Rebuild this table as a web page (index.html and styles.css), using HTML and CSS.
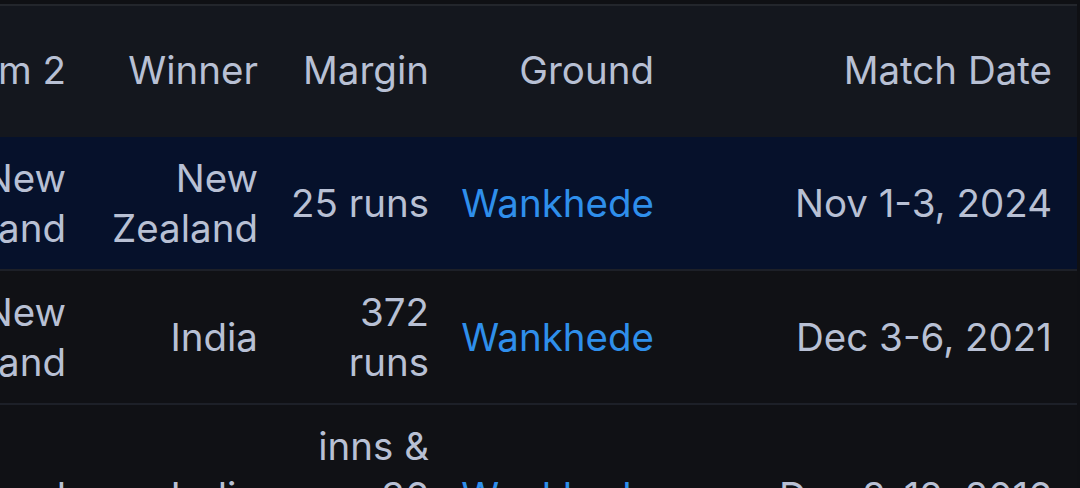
FILE: index.html
```html
<!DOCTYPE html>
<html lang="en">
<head>
<meta charset="utf-8">
<title>Matches</title>
<link rel="stylesheet" href="styles.css">
</head>
<body>
<div class="scroller">
  <table class="matches">
    <colgroup>
      <col class="c-team">
      <col class="c-winner">
      <col class="c-margin">
      <col class="c-ground">
      <col class="c-date">
    </colgroup>
    <thead>
      <tr>
        <th>Team 2</th>
        <th>Winner</th>
        <th>Margin</th>
        <th>Ground</th>
        <th class="last">Match Date</th>
      </tr>
    </thead>
    <tbody>
      <tr class="active">
        <td>New Zealand</td>
        <td>New Zealand</td>
        <td>25 runs</td>
        <td><a class="ground" href="#">Wankhede</a></td>
        <td class="last">Nov 1-3, 2024</td>
      </tr>
      <tr>
        <td>New Zealand</td>
        <td>India</td>
        <td>372 runs</td>
        <td><a class="ground" href="#">Wankhede</a></td>
        <td class="last">Dec 3-6, 2021</td>
      </tr>
      <tr>
        <td>England</td>
        <td>India</td>
        <td>inns &amp; 36<br>runs</td>
        <td><a class="ground" href="#">Wankhede</a></td>
        <td class="last">Dec 8-12, 2016</td>
      </tr>
    </tbody>
  </table>
</div>
</body>
</html>
```

FILE: styles.css
```css
html, body {
  margin: 0;
  padding: 0;
  background: #0f1014;
  height: 100%;
  overflow: hidden;
}

body {
  font-family: "Inter", "Noto Sans", sans-serif;
  color: #b8c0d4;
}

.scroller {
  margin-top: 4px;
  width: 1077px;
  overflow: hidden;
  border-top: 2px solid #23262c;
  background: #101115;
}

.matches {
  margin-left: -99px;
  border-collapse: collapse;
  table-layout: fixed;
  width: 1176px;
  font-size: 38.5px;
  line-height: 50px;
}

.c-team { width: 181px; }
.c-winner { width: 192px; }
.c-margin { width: 171px; }
.c-ground { width: 225px; }
.c-date { width: 407px; }

.matches th,
.matches td {
  text-align: right;
  vertical-align: middle;
  padding-left: 16px;
  padding-right: 16px;
  font-weight: 400;
}

.matches th {
  background: #14171e;
  padding-top: 39px;
  padding-bottom: 42px;
  color: #b8c0d4;
}

.matches td {
  padding-top: 16px;
  padding-bottom: 16px;
  border-bottom: 2px solid #1d2028;
}

.matches .last {
  padding-right: 25px;
}

.matches tr.active td {
  background: #06112b;
}

.ground {
  color: #2f8feb;
  text-decoration: none;
}
```
